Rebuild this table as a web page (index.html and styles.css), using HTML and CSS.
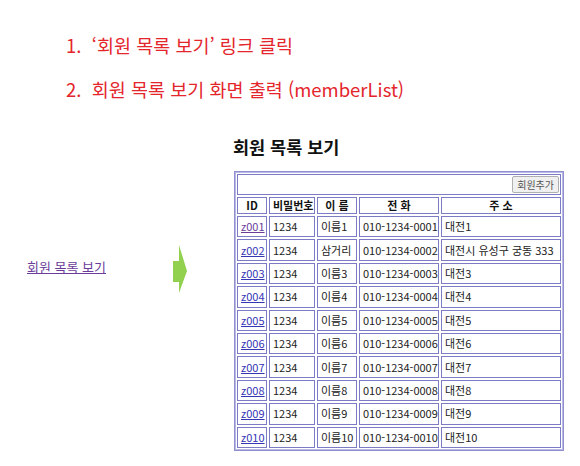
FILE: index.html
```html
<!DOCTYPE html>
<html lang="ko">
<head>
<meta charset="utf-8">
<link rel="stylesheet" href="styles.css">
</head>
<body>
<div class="steps">
  <p class="step">1.&nbsp;&nbsp;‘회원 목록 보기’ 링크 클릭</p>
  <p class="step">2.&nbsp;&nbsp;회원 목록 보기 화면 출력 (memberList)</p>
</div>
<div class="main">
  <div class="left">
    <a class="navlink" href="#">회원 목록 보기</a>
    <svg class="arrow" width="16" height="48" viewBox="0 0 16 48"><polygon points="1,16 7,16 7,0 15,26 7,48 7,37 1,37" fill="#92d050"/></svg>
  </div>
  <div class="right">
    <h2 class="title">회원 목록 보기</h2>
    <table class="list">
      <colgroup><col class="c1"><col class="c2"><col class="c3"><col class="c4"><col class="c5"></colgroup>
      <tr class="toprow"><td colspan="5" class="btncell"><button class="btn">회원추가</button></td></tr>
      <tr class="head"><th>ID</th><th>비밀번호</th><th>이 름</th><th>전 화</th><th>주 소</th></tr>
      <tr><td><a class="visited" href="#">z001</a></td><td>1234</td><td>이름1</td><td>010-1234-0001</td><td>대전1</td></tr>
      <tr><td><a href="#">z002</a></td><td>1234</td><td>삼거리</td><td>010-1234-0002</td><td>대전시 유성구 궁동 333</td></tr>
      <tr><td><a href="#">z003</a></td><td>1234</td><td>이름3</td><td>010-1234-0003</td><td>대전3</td></tr>
      <tr><td><a href="#">z004</a></td><td>1234</td><td>이름4</td><td>010-1234-0004</td><td>대전4</td></tr>
      <tr><td><a href="#">z005</a></td><td>1234</td><td>이름5</td><td>010-1234-0005</td><td>대전5</td></tr>
      <tr><td><a href="#">z006</a></td><td>1234</td><td>이름6</td><td>010-1234-0006</td><td>대전6</td></tr>
      <tr><td><a href="#">z007</a></td><td>1234</td><td>이름7</td><td>010-1234-0007</td><td>대전7</td></tr>
      <tr><td><a href="#">z008</a></td><td>1234</td><td>이름8</td><td>010-1234-0008</td><td>대전8</td></tr>
      <tr><td><a href="#">z009</a></td><td>1234</td><td>이름9</td><td>010-1234-0009</td><td>대전9</td></tr>
      <tr><td><a href="#">z010</a></td><td>1234</td><td>이름10</td><td>010-1234-0010</td><td>대전10</td></tr>
    </table>
  </div>
</div>
</body>
</html>
```
FILE: styles.css
```css
html, body {
  margin: 0;
  padding: 0;
  background: #ffffff;
  font-family: "Noto Sans CJK KR", "Noto Sans", sans-serif;
}
.steps {
  padding: 32px 0 0 66px;
}
.step {
  margin: 0 0 17px 0;
  font-size: 18.5px;
  line-height: 27px;
  color: #e4262c;
}
.step:last-child {
  margin-bottom: 0;
}
.main {
  display: flex;
  align-items: flex-start;
}
.left {
  flex: 0 0 233px;
  width: 233px;
  box-sizing: border-box;
  padding-left: 27px;
  margin-top: 142px;
  display: flex;
  align-items: flex-start;
}
.navlink {
  flex: 0 0 145px;
  margin-top: 13px;
  font-size: 13px;
  line-height: 18px;
  color: #6a3d9a;
  text-decoration: underline;
}
.arrow {
  display: block;
}
.right {
  flex: 0 0 auto;
  margin-top: 32px;
}
.title {
  margin: 0 0 12px 0;
  font-size: 17.5px;
  line-height: 24px;
  font-weight: bold;
  color: #111;
}
.list {
  margin-left: 1px;
  width: 330px;
  table-layout: fixed;
  border-collapse: separate;
  border-spacing: 2px;
  border: 1px solid #9090d0;
  box-shadow: inset 0 0 0 1px #b8b8e4;
  font-size: 11px;
  color: #222;
}
.c1 { width: 30px; }
.c2 { width: 46px; }
.c3 { width: 40px; }
.c4 { width: 80px; }
.list td, .list th {
  border: 1px solid #7c7cc4;
  padding: 0 3px;
  height: 19.4px;
  line-height: 15px;
  text-align: left;
  white-space: nowrap;
  overflow: hidden;
}
.list th {
  height: 15px;
  font-weight: bold;
  text-align: center;
  color: #111;
}
.list .toprow td {
  height: 19px;
  text-align: right;
  padding: 0 1px;
}
.list a {
  color: #3535b5;
  text-decoration: underline;
}
.list a.visited {
  color: #6a3d9a;
}
.btn {
  font-family: "Noto Sans CJK KR", sans-serif;
  font-size: 10px;
  line-height: 13px;
  color: #555;
  background: #f0f0f0;
  border: 1px solid #b0b0b0;
  border-radius: 2px;
  padding: 1px 4px;
  margin: 1px 0;
  vertical-align: middle;
}
```
